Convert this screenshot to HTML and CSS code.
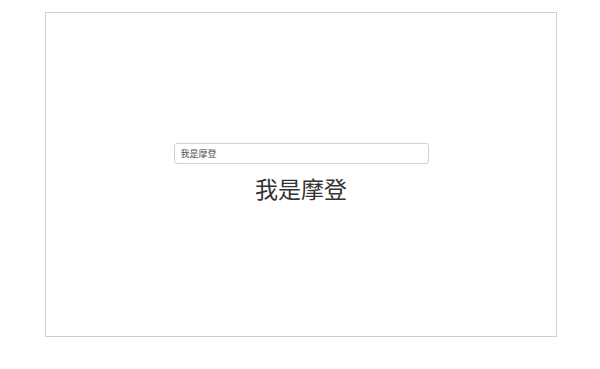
FILE: index.html
```html
<!DOCTYPE html>
<html lang="zh">
<head>
<meta charset="utf-8">
<title>我是摩登</title>
<link rel="stylesheet" href="styles.css">
</head>
<body>
<div class="frame">
  <div class="content">
    <input class="field" type="text" value="我是摩登">
    <div class="echo">我是摩登</div>
  </div>
</div>
</body>
</html>
```
FILE: styles.css
```css
html, body {
  margin: 0;
  padding: 0;
  background: #fff;
}
body {
  font-family: "Noto Sans CJK SC", "Noto Sans", sans-serif;
  color: #333;
}
.frame {
  box-sizing: border-box;
  margin: 12px 0 0 45px;
  width: 512px;
  height: 325px;
  border: 1px solid #cfcfcf;
  display: flex;
  justify-content: center;
}
.content {
  margin-top: 130px;
  display: flex;
  flex-direction: column;
  align-items: center;
}
.field {
  box-sizing: border-box;
  width: 255px;
  height: 21px;
  border: 1px solid #d0d0d0;
  border-radius: 3px;
  padding: 0 6px;
  font-family: "Noto Sans CJK SC", sans-serif;
  font-size: 9px;
  color: #555;
  outline: none;
}
.echo {
  margin-top: 9px;
  font-size: 23px;
  line-height: 30px;
  color: #333;
}
```
